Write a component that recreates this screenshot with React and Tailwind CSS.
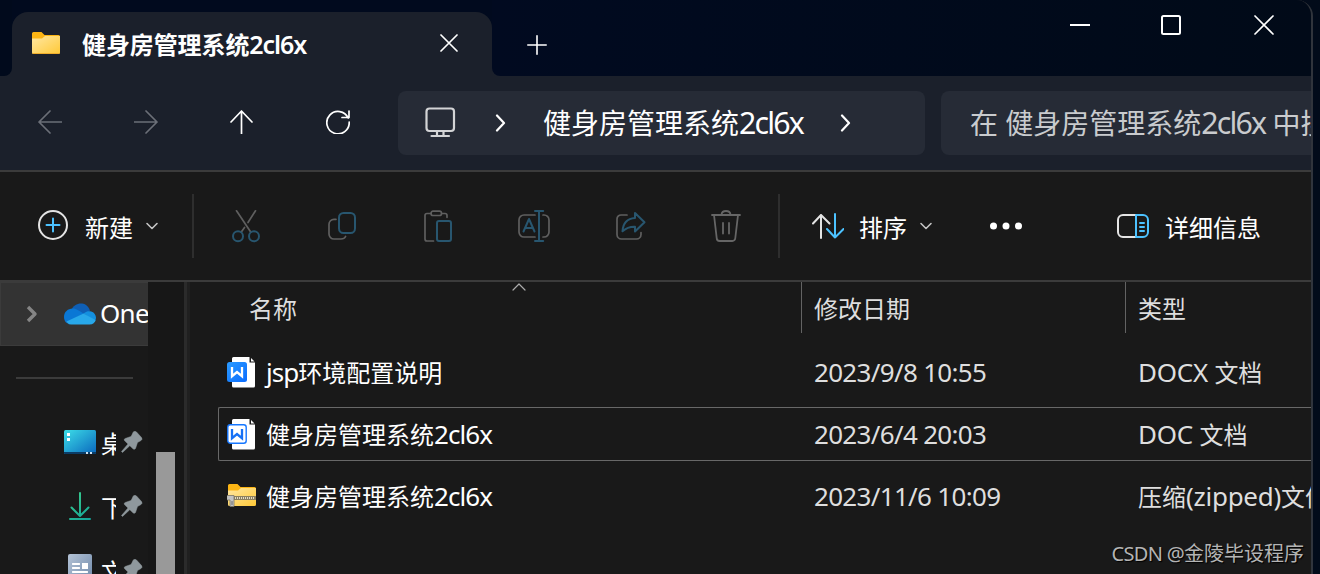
import { Fragment, useState } from 'react';

const FOLDER_NAME = '健身房管理系统2cl6x';

const files = [
    { id: 1, name: 'jsp环境配置说明', date: '2023/9/8 10:55', type: 'DOCX 文档', kind: 'docx' },
    { id: 2, name: FOLDER_NAME, date: '2023/6/4 20:03', type: 'DOC 文档', kind: 'doc' },
    { id: 3, name: FOLDER_NAME, date: '2023/11/6 10:09', type: '压缩(zipped)文件夹', kind: 'zip' },
];

// Latin runs are set a little larger than the Chinese glyphs around them
const Label = ({ text, tracking = 'tracking-[-0.026em]' }) =>
    text.split(/([\x21-\x7e][\x20-\x7e]*)/).map((part, i) =>
        i % 2 ? (
            <span key={i} className={`text-[1.083em] leading-none whitespace-pre ${tracking}`}>{part}</span>
        ) : (
            <Fragment key={i}>{part}</Fragment>
        )
    );

const Svg = ({ w, h, className = '', children }) => (
    <svg
        width={w}
        height={h}
        viewBox={`0 0 ${w} ${h}`}
        fill="none"
        stroke="currentColor"
        strokeWidth="2"
        strokeLinecap="round"
        strokeLinejoin="round"
        className={`block shrink-0 ${className}`}
    >
        {children}
    </svg>
);

/* ---------- icons ---------- */

const FolderIcon = () => (
    <Svg w={28} h={22}>
        <defs>
            <linearGradient id="folderFront" x1="0" y1="0" x2="1" y2="1">
                <stop offset="0" stopColor="#ffe7a2" />
                <stop offset="1" stopColor="#ffc937" />
            </linearGradient>
        </defs>
        <path d="M0 1.500A1.500 1.500 0 0 1 1.500 0H9.500L12.500 3H26.500A1.500 1.500 0 0 1 28 4.500V12H0Z" fill="#fdb514" stroke="none" />
        <path d="M0 6.500H10L13 4H28V20.500A1.500 1.500 0 0 1 26.500 22H1.500A1.500 1.500 0 0 1 0 20.500Z" fill="url(#folderFront)" stroke="none" />
        <path d="M1 21.500H27" stroke="#f0ae2c" strokeWidth="1" />
    </Svg>
);

const CloseIcon = ({ size }) => (
    <Svg w={size} h={size}>
        <path d={`M1 1L${size - 1} ${size - 1}M${size - 1} 1L1 ${size - 1}`} strokeWidth="1.7" />
    </Svg>
);

const ChevronDown = () => (
    <Svg w={14} h={10}>
        <path d="M2 2.500L7 7.500L12 2.500" stroke="#c4c4c4" strokeWidth="1.600" />
    </Svg>
);

const ChevronRight = () => (
    <Svg w={11} h={18}>
        <path d="M2 1.500L9 9L2 16.500" strokeWidth="2.200" />
    </Svg>
);

const CutIcon = () => (
    <Svg w={36} h={36} className="text-[#5f5f5f]">
        <path d="M8.500 2.800L22.700 24M27.500 2.800L20 14.500M16.500 19.500L13.300 24" strokeWidth="1.700" />
        <circle cx="10" cy="28.300" r="5" stroke="#28566f" />
        <circle cx="26" cy="28.300" r="5" stroke="#28566f" />
    </Svg>
);

const CopyIcon = () => (
    <Svg w={36} h={36} className="text-[#5f5f5f]">
        <path d="M12 11.300H10A5 5 0 0 0 5 16.300V26A5 5 0 0 0 10 31H17Q20.500 31 21.600 28.500" strokeWidth="1.700" />
        <rect x="15" y="5" width="16" height="20" rx="4.500" stroke="#28566f" />
    </Svg>
);

const PasteIcon = () => (
    <Svg w={36} h={36} className="text-[#5f5f5f]">
        <path d="M13.500 33H7A2 2 0 0 1 5 31V7.500A2 2 0 0 1 7 5.500H11M22 5.500H25A2 2 0 0 1 27 7.500V9.300" strokeWidth="1.700" />
        <rect x="11" y="3.200" width="10.500" height="4.300" rx="2.100" strokeWidth="1.700" />
        <rect x="17" y="13" width="14" height="20" rx="2" stroke="#28566f" />
    </Svg>
);

const RenameIcon = () => (
    <Svg w={36} h={36} className="text-[#5f5f5f]">
        <path d="M19 7H8A5 5 0 0 0 3 12V24A5 5 0 0 0 8 29H19M27 7H28A5 5 0 0 1 33 12V24A5 5 0 0 1 28 29H27" strokeWidth="1.700" />
        <path d="M23 3V33M19 3H27.200M19 33H27.200M7.500 23.500L13 11L18.500 23.500M9.300 20H16.700" stroke="#28566f" />
    </Svg>
);

const ShareIcon = () => (
    <Svg w={36} h={36} className="text-[#5f5f5f]">
        <path d="M15 7H9A4 4 0 0 0 5 11V26.500A4.500 4.500 0 0 0 9.500 31H24.500A4.500 4.500 0 0 0 29 26.500V24.500" strokeWidth="1.700" />
        <path d="M23 5L32.500 14.300L23 23.500V18.700C17 18.500 13.500 20.500 10.500 23.300C11 15 15.500 10.500 23 10Z" stroke="#28566f" />
    </Svg>
);

const DeleteIcon = () => (
    <Svg w={36} h={36} className="text-[#666]">
        <path d="M4 7H32M13.500 6.500C14 1.800 22 1.800 22.500 6.500M6 7L8.700 30A3 3 0 0 0 11.700 33H24.300A3 3 0 0 0 27.300 30L30 7M15 15V25.500M21 15V25.500" strokeWidth="1.800" />
    </Svg>
);

const CloudIcon = () => (
    <Svg w={32} h={22}>
        <path d="M7 8C9 2 14 0 18 .5C22 1 25 4 26 8L16 14Z" fill="#0f5fb5" stroke="none" />
        <path d="M6.500 21.500C2 21 0 17.500 0 14C0 9 4 5.500 8.500 5.500C12 5.500 14 7 19.500 10.500L3 20Z" fill="#0a77d5" stroke="none" />
        <path d="M19.500 10.500C22 8.500 24 8 26 8.200C29.500 8.500 32 11.500 32 15L31 19Z" fill="#1490df" stroke="none" />
        <path d="M2.500 18.500L19.500 10.500L31.500 17C31 19.500 29 21.500 25.500 21.500H7C5 21.500 3.500 20.500 2.500 18.500Z" fill="#28a8ea" stroke="none" />
    </Svg>
);

const DesktopIcon = () => (
    <Svg w={32} h={24}>
        <defs>
            <linearGradient id="desk" x1="0" y1="0" x2="1" y2="1">
                <stop offset="0" stopColor="#3cdde8" />
                <stop offset="1" stopColor="#0a67bd" />
            </linearGradient>
        </defs>
        <rect width="32" height="24" rx="1.500" fill="url(#desk)" stroke="none" />
        <path d="M0 22H32V23A1 1 0 0 1 31 24H1A1 1 0 0 1 0 23Z" fill="#0b3c66" stroke="none" />
        <path d="M3 3H6V6H3ZM3 8H6V11H3Z" fill="#fff" stroke="none" />
        <path d="M22 22H24V24H22ZM26 22H28V24H26Z" fill="#cfe2f2" stroke="none" />
    </Svg>
);

const DownloadIcon = () => (
    <Svg w={32} h={28}>
        <defs>
            <linearGradient id="down" gradientUnits="userSpaceOnUse" x1="5" y1="0" x2="27" y2="28">
                <stop offset="0" stopColor="#3ccf8a" />
                <stop offset="1" stopColor="#12a39a" />
            </linearGradient>
        </defs>
        <path d="M16 1V23.500M7.500 15.500L16 24L24.500 15.500M6 27H26" stroke="url(#down)" />
    </Svg>
);

const DocumentsIcon = () => (
    <Svg w={32} h={32}>
        <defs>
            <linearGradient id="docs" x1="0" y1="0" x2="1" y2="1">
                <stop offset="0" stopColor="#b4c3d6" />
                <stop offset="1" stopColor="#6b86a8" />
            </linearGradient>
        </defs>
        <rect x="4" y="0" width="24" height="32" rx="2" fill="url(#docs)" stroke="none" />
        <path d="M9 10H15M9 14H15M9 18H23" stroke="#fff" strokeLinecap="square" strokeWidth="1.800" />
        <rect x="18" y="9" width="6" height="6" fill="#fff" stroke="none" />
    </Svg>
);

const PinIcon = () => (
    <Svg w={22} h={22} className="text-[#8f989d]">
        <path d="M12.500 .8Q14 -.3 15.500 1L20.500 6.500Q21.800 8.500 20 9.500L16.500 11.500L14.500 17.500Q13.500 19 12 17.800L8.800 14.700L1.500 21.500L.5 20.500L7 13L3.500 9.600Q2.600 8.200 4.200 7.500L10 5.500Z" fill="currentColor" strokeWidth=".5" />
    </Svg>
);

const WordIcon = ({ outlined }) => (
    <Svg w={28} h={31}>
        <defs>
            <linearGradient id="wps" x1="0" y1="0" x2="1" y2="1">
                <stop offset="0" stopColor="#2b9bff" />
                <stop offset="1" stopColor="#0a6cff" />
            </linearGradient>
        </defs>
        <path d="M5 1.500Q5 0 6.500 0H22.500V5.500H28V29Q28 30.500 26.500 30.500H6.500Q5 30.500 5 29Z" fill="#fff" stroke="none" />
        <path d="M24 1L27.500 4.500H24Z" fill="#fff" stroke="none" />
        <rect
            x={outlined ? .8 : 0}
            y={outlined ? 5.8 : 5}
            width={outlined ? 18.4 : 20}
            height={outlined ? 18.4 : 20}
            rx="2.500"
            fill={outlined ? '#fff' : 'url(#wps)'}
            stroke={outlined ? '#1677ff' : 'none'}
            strokeWidth="1.400"
        />
        <path d="M5 10V19.200L10 15L15 19.200V10" stroke={outlined ? '#1670f5' : '#fff'} strokeWidth="2.300" strokeLinecap="butt" strokeLinejoin="miter" />
    </Svg>
);

const ZipIcon = () => (
    <Svg w={29} h={24}>
        <path d="M1 1.500Q1 0 2.500 0H10.500L13.500 3H27.500Q29 3 29 4.500V12H1Z" fill="#fdb514" stroke="none" />
        <path d="M1 6.500H11L14 4H29V20.500Q29 22 27.500 22H2.500Q1 22 1 20.500Z" fill="url(#folderFront)" stroke="none" />
        <path d="M7 14H29" stroke="#8c8060" strokeWidth="4" strokeLinecap="butt" />
        <path d="M8 14H28" stroke="#e4dcc4" strokeWidth="2" strokeDasharray="1 1" strokeLinecap="butt" />
        <path d="M0 11.500H7V16H7V22.500H3V16H0Z" fill="#c3c3c3" stroke="#7c7668" strokeWidth=".8" />
        <path d="M5 17.500V20.500" stroke="#666" strokeWidth="1" />
    </Svg>
);

const fileIcons = {
    docx: <WordIcon />,
    doc: <WordIcon outlined />,
    zip: <ZipIcon />,
};

const actions = [
    { key: 'cut', icon: <CutIcon /> },
    { key: 'copy', icon: <CopyIcon /> },
    { key: 'paste', icon: <PasteIcon /> },
    { key: 'rename', icon: <RenameIcon /> },
    { key: 'share', icon: <ShareIcon /> },
    { key: 'delete', icon: <DeleteIcon /> },
];

const places = [
    { key: 'desktop', label: '桌面', icon: <DesktopIcon /> },
    { key: 'downloads', label: '下载', icon: <DownloadIcon /> },
    { key: 'documents', label: '文档', icon: <DocumentsIcon /> },
];

/* ---------- sections ---------- */

function TitleBar() {
    return (
        <div className="flex h-[76px] shrink-0 bg-[#1b202b]">
            <div className="w-3 rounded-br-lg bg-[#010a1c]" />
            <div className="w-[480px] bg-[#010a1e] pt-3">
                <div className="flex h-16 items-center rounded-t-2xl bg-[#1b202b] pl-5 pr-[34px] text-white">
                    <div className="pb-0.5">
                        <FolderIcon />
                    </div>
                    <span className="ml-[22px] flex-1 pt-0.5 text-2xl leading-8 font-bold tracking-[-0.1px] whitespace-nowrap">
                        健身房管理系统<span className="text-[25px] leading-none font-semibold tracking-[-1.1px]">2cl6x</span>
                    </span>
                    <div className="pb-0.5">
                        <CloseIcon size={18} />
                    </div>
                </div>
            </div>
            <div className="flex flex-1 rounded-bl-lg bg-linear-to-r from-[#010a20] to-[#010a18] text-white">
                <button className="ml-[35px] flex h-full items-center pt-3.5">
                    <Svg w={20} h={20}>
                        <path d="M10 .8V19.200M.8 10H19.200" strokeWidth="1.600" />
                    </Svg>
                </button>
                <div className="mr-[37px] ml-auto flex h-[50px] items-center">
                    <Svg w={20} h={20} className="mr-[71px]">
                        <path d="M0 10H20" strokeLinecap="butt" />
                    </Svg>
                    <Svg w={20} h={20} className="mr-[73px]">
                        <rect x="1" y="1" width="18" height="18" rx="1.500" />
                    </Svg>
                    <CloseIcon size={20} />
                </div>
            </div>
        </div>
    );
}

function NavBar() {
    return (
        <div className="flex h-[94px] shrink-0 items-center bg-[#1b202b] text-[28px] leading-10 text-white">
            <div className="flex w-[398px] shrink-0 items-center gap-[72px] pb-0.5 pl-[38px]">
                <Svg w={24} h={24} className="text-[#6b6f78]">
                    <path d="M24 12H1M12 1L1 12L12 23" strokeWidth="1.700" />
                </Svg>
                <Svg w={24} h={24} className="text-[#6b6f78]">
                    <path d="M0 12H23M12 1L23 12L12 23" strokeWidth="1.700" />
                </Svg>
                <Svg w={24} h={24}>
                    <path d="M11.500 24V1M1 12L11.500 1L22 12" strokeWidth="1.700" />
                </Svg>
                <Svg w={24} h={24}>
                    <path d="M22.200 8A11.200 11.200 0 1 0 23.200 12M23 1V7.500H16" strokeWidth="1.700" />
                </Svg>
            </div>
            <div className="flex h-16 w-[527px] shrink-0 items-center rounded-lg bg-[#262b36] pl-[27px]">
                <div className="pb-0.5">
                    <Svg w={31} h={31} className="text-[#d3d4d6]">
                        <rect x="1.500" y="1.500" width="27.500" height="22.500" rx="3" strokeWidth="2.200" />
                        <path d="M12 24V29M18.500 24V29M6.500 29H24" strokeWidth="2.200" />
                    </Svg>
                </div>
                <div className="ml-[39px]">
                    <ChevronRight />
                </div>
                <span className="ml-[37px] w-[261px] whitespace-nowrap">
                    <Label text={FOLDER_NAME} tracking="tracking-[-0.06em]" />
                </span>
                <div className="ml-9">
                    <ChevronRight />
                </div>
            </div>
            <div className="ml-4 h-16 flex-1 overflow-hidden rounded-l-lg bg-[#262b36] pt-3 pl-[29px] whitespace-nowrap text-[#c9cbce]">
                在 健身房管理系统<Label text="2cl6x" tracking="tracking-[-0.06em]" /> 中搜索
            </div>
        </div>
    );
}

function Toolbar() {
    return (
        <div className="flex h-28 shrink-0 items-center border-y-2 border-[#3b3b3b] text-2xl leading-8 text-white">
            <div className="flex w-[192px] items-center pl-[38px]">
                <div className="pb-0.5">
                    <Svg w={30} h={30} className="text-[#e4e4e4]">
                        <circle cx="15" cy="15" r="14" />
                        <path d="M15 8.500V21.500M8.500 15H21.500" stroke="#4cc2ff" />
                    </Svg>
                </div>
                <span className="mr-3 ml-[17px] pt-1">新建</span>
                <ChevronDown />
            </div>
            <div className="h-16 w-0.5 bg-[#2e2e2e]" />
            <div className="ml-1 flex">
                {actions.map(action => (
                    <button key={action.key} className="flex w-24 justify-center">
                        {action.icon}
                    </button>
                ))}
            </div>
            <div className="ml-1 h-16 w-0.5 bg-[#2e2e2e]" />
            <div className="ml-8 flex items-center">
                <Svg w={32} h={26} className="text-[#e4e4e4]">
                    <path d="M9 25V2M1 10.500L9 2L17.500 10.500" />
                    <path d="M23 1V24.500M15 16L23 24.500L31.500 16" stroke="#4cc2ff" />
                </Svg>
                <span className="mr-3 ml-[15px] pt-1">排序</span>
                <ChevronDown />
            </div>
            <Svg w={34} h={8} className="ml-14">
                <g fill="currentColor" stroke="none">
                    <circle cx="4.500" cy="4" r="3.500" />
                    <circle cx="17" cy="4" r="3.500" />
                    <circle cx="29.500" cy="4" r="3.500" />
                </g>
            </Svg>
            <div className="mr-[50px] ml-auto flex items-center">
                <Svg w={32} h={24} className="text-[#e4e4e4]">
                    <path d="M19 1H6A5 5 0 0 0 1 6V18A5 5 0 0 0 6 23H19" />
                    <path d="M19 1H26A5 5 0 0 1 31 6V18A5 5 0 0 1 26 23H19ZM23 9H27M23 13H27M23 17H27" stroke="#4cc2ff" />
                </Svg>
                <span className="ml-4 pt-1">详细信息</span>
            </div>
        </div>
    );
}

function Sidebar() {
    return (
        <div className="flex w-[190px] shrink-0 overflow-hidden text-2xl leading-8 text-white">
            <div className="w-[148px] shrink-0 overflow-hidden">
                <div className="flex h-16 items-center border border-r-0 border-[#3b3b3b] bg-[#333] pl-[25px]">
                    <Svg w={12} h={18}>
                        <path d="M2 2L9 9L2 16" stroke="#858585" strokeWidth="3.400" strokeLinecap="butt" />
                    </Svg>
                    <div className="ml-[26px]">
                        <CloudIcon />
                    </div>
                    <span className="ml-1"><Label text="OneDrive" /></span>
                </div>
                <div className="mt-[31px] ml-4 h-0.5 w-[117px] bg-[#3b3b3b]" />
                <div className="mt-[31px]">
                    {places.map(place => (
                        <div key={place.key} className="flex h-16 items-center pl-16">
                            {place.icon}
                            <span className="ml-[5px] w-[15px] overflow-hidden pt-1 whitespace-nowrap">{place.label}</span>
                            <div className="ml-[5px]">
                                <PinIcon />
                            </div>
                        </div>
                    ))}
                </div>
            </div>
            <div className="w-9 shrink-0 bg-[#171717] pt-[170px] pl-2">
                <div className="h-full w-[19px] bg-[#999]" />
            </div>
            <div className="w-[3px] bg-[#2b2b2b]" />
            <div className="w-[3px] bg-[#202020]" />
        </div>
    );
}

function FileList() {
    const [focused, setFocused] = useState(2);

    return (
        <div className="flex-1 overflow-hidden pl-7 text-2xl leading-8 whitespace-nowrap text-[#dedede]">
            <div className="flex h-[51px]">
                <div className="relative w-[583px] shrink-0 pt-[11px] pl-[31px]">
                    名称
                    <Svg w={14} h={8} className="absolute top-px left-[294px]">
                        <path d="M1 7L7 1L13 7" stroke="#aaa" strokeWidth="1.200" />
                    </Svg>
                </div>
                <div className="w-[324px] shrink-0 border-l border-[#636363] pt-[11px] pl-3">修改日期</div>
                <div className="flex-1 border-l border-[#636363] pt-[11px] pl-3">类型</div>
            </div>
            <div className="mt-3 flex flex-col gap-2">
                {files.map(file => (
                    <div
                        key={file.id}
                        onClick={() => setFocused(file.id)}
                        className={`flex h-[54px] items-center rounded-l-xs border border-r-0 ${focused === file.id ? 'border-[#686868]' : 'border-transparent'}`}
                    >
                        <div className="flex w-[587px] shrink-0 items-center pl-2">
                            <div className="w-7">{fileIcons[file.kind]}</div>
                            <span className="ml-[11px] pt-0.5 text-white">
                                <Label text={file.name} tracking="tracking-[-0.036em]" />
                            </span>
                        </div>
                        <span className="ml-2 w-[324px] shrink-0 pt-0.5"><Label text={file.date} /></span>
                        <span className="pt-0.5"><Label text={file.type} tracking="tracking-[-0.01em]" /></span>
                    </div>
                ))}
            </div>
        </div>
    );
}

export default function App() {
    return (
        <div className="relative h-[574px] w-[1320px] overflow-hidden bg-[#020b1a] font-['Noto_Sans','Noto_Sans_CJK_SC',sans-serif]">
            <div className="flex h-full w-[1313px] flex-col overflow-hidden rounded-tr-2xl border-r-2 border-[#30343c] bg-[#191919]">
                <TitleBar />
                <NavBar />
                <Toolbar />
                <div className="flex min-h-0 flex-1">
                    <Sidebar />
                    <FileList />
                </div>
            </div>
            <div className="absolute right-4 bottom-1 text-xl leading-8 whitespace-nowrap text-[#b4b4b4] text-shadow-[1px_1px_1px_#000]">
                <span className="tracking-[-0.7px]">CSDN @</span>金陵毕设程序
            </div>
        </div>
    );
}
